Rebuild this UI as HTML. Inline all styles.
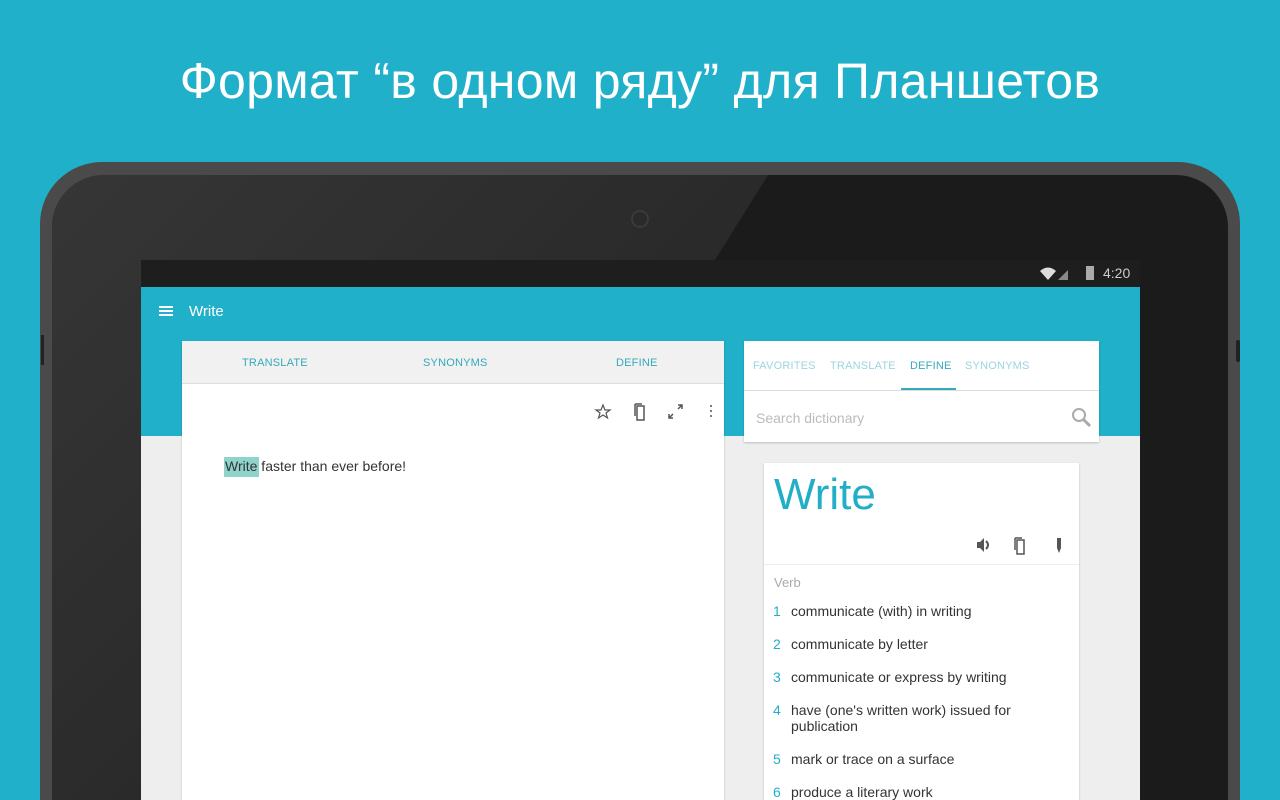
<!DOCTYPE html>
<html><head><meta charset="utf-8"><style>
*{margin:0;padding:0;box-sizing:border-box}
html{width:1280px;height:800px;overflow:hidden}
body{width:1280px;height:800px;overflow:hidden;background:#21b0c9;font-family:"Liberation Sans",sans-serif;position:relative}
.abs{position:absolute}
h1{position:absolute;top:52px;left:0;width:1280px;text-align:center;color:#fff;font-weight:normal;font-size:50px;letter-spacing:0.3px}
.tab{position:absolute;left:40px;top:162px;width:1200px;height:638px;border-radius:62px 62px 0 0;background:#4a4a4a}
.bez{position:absolute;left:52px;top:175px;width:1176px;height:625px;border-radius:52px 52px 0 0;background:#1b1b1b;overflow:hidden}
.glare{position:absolute;left:0;top:0;width:1176px;height:625px;background:linear-gradient(135deg,#363636,#2a2a2a 40%,#242424);clip-path:polygon(0 0,716px 0,663px 85px,663px 625px,0 625px)}
.screen{position:absolute;left:141px;top:260px;width:999px;height:540px;background:#eeeeee;overflow:hidden}
.card{position:absolute;background:#fff;box-shadow:0 1px 2px rgba(0,0,0,.2)}
.t{position:absolute;font-size:11px;color:#36a9bb;letter-spacing:.2px}
.def{position:absolute;left:27px;font-size:14px;color:#333}
.def b{position:absolute;left:-18px;font-weight:normal;color:#22aec7}
</style></head><body>
<h1>Формат “в одном ряду” для Планшетов</h1>
<div class="tab"></div>
<div class="bez"><div class="glare"></div></div>
<div class="abs" style="left:631px;top:210px;width:18px;height:18px;border-radius:50%;background:#2a2a2a;border:2px solid #3a3a3a"></div>
<div class="abs" style="left:41px;top:335px;width:3px;height:30px;background:#222"></div>
<div class="abs" style="left:1236px;top:340px;width:4px;height:22px;background:#222;border-radius:2px"></div>
<div class="screen">
 <div class="abs" style="left:0;top:0;width:999px;height:27px;background:#1e1e1e"></div>
 <svg class="abs" style="left:898px;top:6px" width="40" height="16" viewBox="0 0 40 16">
  <path d="M1 5 Q9 -2 17 5 L9 14 Z" fill="#ddd"/><path d="M19 14 L29 4 L29 14Z" fill="#888"/>
 </svg>
 <div class="abs" style="left:945px;top:6px;width:8px;height:14px;background:#aaa"></div>
 <div class="abs" style="left:962px;top:5px;color:#ccc;font-size:14px">4:20</div>
 <div class="abs" style="left:0;top:27px;width:999px;height:149px;background:#21b0c9"></div>
 <div class="abs" style="left:18px;top:46px;width:14px;height:2px;background:#fff;box-shadow:0 4px 0 #fff,0 8px 0 #fff"></div>
 <div class="abs" style="left:48px;top:43px;color:#fff;font-size:15px">Write</div>
 <div class="card" style="left:41px;top:81px;width:542px;height:470px">
  <div class="abs" style="left:0;top:0;width:542px;height:43px;background:#f1f1f1;border-bottom:1px solid #ddd"></div>
  <div class="t" style="left:60px;top:16px">TRANSLATE</div>
  <div class="t" style="left:241px;top:16px">SYNONYMS</div>
  <div class="t" style="left:434px;top:16px">DEFINE</div>
  <svg class="abs" style="left:410px;top:60px" width="125" height="22" viewBox="0 0 125 22" fill="none" stroke="#555" stroke-width="1.5">
   <path d="M11 4 L13 9 L18 9 L14 12 L15.5 17 L11 14 L6.5 17 L8 12 L4 9 L9 9Z" stroke-width="1.2"/>
   <path d="M43 3 L43 15 M45 5 L52 5 L52 19 L45 19 Z"/><path d="M43 3 L50 3"/>
   <path d="M81 13 L77 17 M77 13 L77 17 L81 17 M86 8 L90 4 M86 4 L90 4 L90 8"/>
   <circle cx="119" cy="5" r="1" fill="#555" stroke="none"/><circle cx="119" cy="10" r="1" fill="#555" stroke="none"/><circle cx="119" cy="15" r="1" fill="#555" stroke="none"/>
  </svg>
  <div class="abs" style="left:42px;top:116px;width:35px;height:20px;background:#8fd3cb"></div>
  <div class="abs" style="left:43px;top:117px;font-size:14px;color:#333">Write faster than ever before!</div>
 </div>
 <div class="card" style="left:603px;top:81px;width:355px;height:101px">
  <div class="t" style="left:9px;top:19px;color:#9ad5df">FAVORITES</div>
  <div class="t" style="left:86px;top:19px;color:#9ad5df">TRANSLATE</div>
  <div class="t" style="left:166px;top:19px">DEFINE</div>
  <div class="t" style="left:221px;top:19px;color:#9ad5df">SYNONYMS</div>
  <div class="abs" style="left:157px;top:47px;width:55px;height:2px;background:#36a9bb"></div>
  <div class="abs" style="left:0;top:49px;width:355px;height:1px;background:#ddd"></div>
  <div class="abs" style="left:12px;top:69px;font-size:14px;color:#bbb">Search dictionary</div>
  <svg class="abs" style="left:327px;top:66px" width="22" height="22" viewBox="0 0 22 22" fill="none" stroke="#aaa" stroke-width="2"><circle cx="8" cy="8" r="6"/><path d="M12.5 12.5 L19 19" stroke-width="3"/></svg>
 </div>
 <div class="card" style="left:623px;top:203px;width:315px;height:360px">
  <div class="abs" style="left:10px;top:7px;font-size:44px;color:#22aec7">Write</div>
  <svg class="abs" style="left:210px;top:72px" width="95" height="22" viewBox="0 0 95 22" fill="#555">
   <path d="M3 7 L6 7 L10 3 L10 17 L6 13 L3 13Z"/><path d="M12 6 Q16 10 12 14" fill="none" stroke="#555" stroke-width="2"/>
   <path d="M41 3 L41 15 M43 5 L50 5 L50 19 L43 19 Z M41 3 L48 3" fill="none" stroke="#555" stroke-width="1.5"/>
   <path d="M83 3 L87 3 L87 13 L85 18 L83 13Z"/>
  </svg>
  <div class="abs" style="left:0;top:101px;width:315px;height:1px;background:#eee"></div>
  <div class="abs" style="left:10px;top:112px;font-size:13px;color:#aaa">Verb</div>
  <div class="def" style="top:140px"><b>1</b>communicate (with) in writing</div>
  <div class="def" style="top:173px"><b>2</b>communicate by letter</div>
  <div class="def" style="top:206px"><b>3</b>communicate or express by writing</div>
  <div class="def" style="top:239px;line-height:16px"><b>4</b>have (one's written work) issued for<br>publication</div>
  <div class="def" style="top:288px"><b>5</b>mark or trace on a surface</div>
  <div class="def" style="top:321px"><b>6</b>produce a literary work</div>
 </div>
</div>
</body></html>
